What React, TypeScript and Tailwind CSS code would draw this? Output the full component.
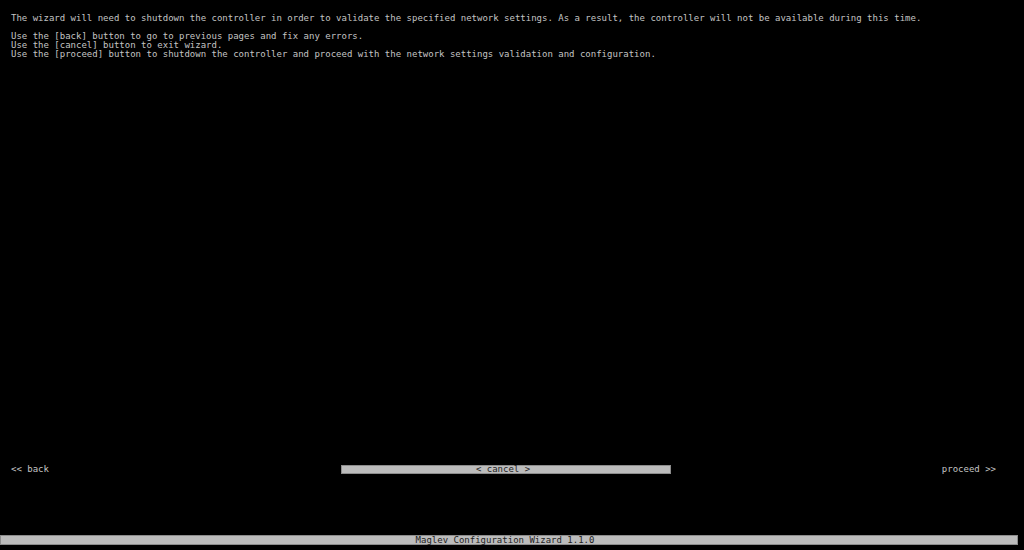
const MONO = "font-['DejaVu_Sans_Mono','Liberation_Mono',monospace]";

const LINES = [
  "Use the [back] button to go to previous pages and fix any errors.",
  "Use the [cancel] button to exit wizard.",
  "Use the [proceed] button to shutdown the controller and proceed with the network settings validation and configuration.",
];

export default function App() {
  return (
    <div
      className={`${MONO} flex h-[550px] w-[1024px] flex-col overflow-hidden bg-black text-[9px] leading-[9px] text-[#c4c4c4] whitespace-pre`}
    >
      {/* message */}
      <div className="flex flex-col pt-[14px] pl-[11px]">
        <p>
          The wizard will need to shutdown the controller in order to validate the specified network
          settings. As a result, the controller will not be available during this time.
        </p>
        <p>&nbsp;</p>
        {LINES.map((line) => (
          <p key={line}>{line}</p>
        ))}
      </div>

      <div className="flex-1" />

      {/* nav row */}
      <div className="flex h-[9px] items-center">
        <div className="w-[341px] pl-[11px]">&lt;&lt; back</div>
        <div className="flex h-[9px] w-[330px] items-center justify-center border border-[#8c8c8c] bg-[#bcbcbc] pr-[6px] text-[#1e1e1e]">
          &lt; cancel &gt;
        </div>
        <div className="flex flex-1 justify-end pr-[28px]">proceed &gt;&gt;</div>
      </div>

      {/* status bar */}
      <div className="mt-[61px] mb-[5px] mr-[6px] flex h-[10px] items-center justify-center border border-[#8c8c8c] bg-[#bcbcbc] pr-[8px] text-[#1e1e1e]">
        Maglev Configuration Wizard 1.1.0
      </div>
    </div>
  );
}
